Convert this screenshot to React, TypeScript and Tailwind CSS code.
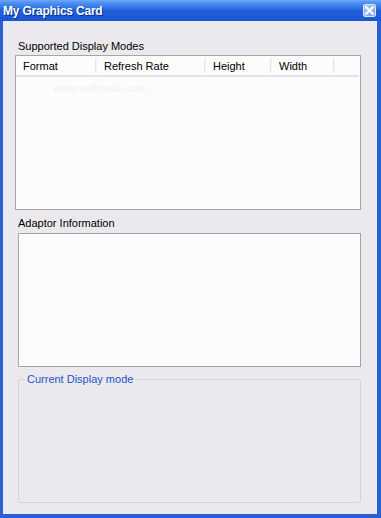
import React from "react";

const font = { fontFamily: '"Liberation Sans", Arial, sans-serif' };

function HeaderCell({ label, width, divider = true }: { label: string; width: number; divider?: boolean }) {
  return (
    <div className="relative flex h-full items-center pl-[7px] pt-[2px]" style={{ width }}>
      <span>{label}</span>
      {divider && <div className="absolute right-0 top-[2px] bottom-[2px] w-[2px] bg-[#e6e5e8] border-r border-[#f4f4f6]" />}
    </div>
  );
}

export default function App() {
  return (
    <div className="w-[381px] h-[518px] flex flex-col text-[11px] text-black select-none" style={font}>
      {/* Title bar */}
      <div className="h-[21px] flex items-center justify-between bg-gradient-to-b from-[#5a9cf6] via-[#1f5fdc] to-[#1a56d2] pl-[3px] pr-[5px] border-t border-[#6ea4f5]">
        <span className="text-white font-bold text-[12px] leading-none tracking-[-0.2px] [text-shadow:1px_1px_0_#0a2a8a]">My Graphics Card</span>
        <div className="w-[13px] h-[13px] mt-[-1px] rounded-[2px] bg-gradient-to-br from-[#a9c6f4] to-[#7fa6e8] border border-[#dbe7fb] flex items-center justify-center">
          <svg width="9" height="9" viewBox="0 0 9 9">
            <path d="M1 1 L8 8 M8 1 L1 8" stroke="white" strokeWidth="2" strokeLinecap="square" />
          </svg>
        </div>
      </div>
      {/* Body */}
      <div className="flex-1 flex flex-col bg-[#ebe9ed] border-l-[3px] border-r-[4px] border-b-[4px] border-[#2a5fd6] pl-[12px]">
        <div className="mt-[18px] ml-[3px] h-[14px] leading-[14px]">Supported Display Modes</div>
        <div className="relative mt-[2px] w-[346px] h-[155px] border border-[#a6a6a9] bg-[#fcfcfc] overflow-hidden">
          <div className="flex h-[21px] border-b-2 border-[#e4e3e7] w-[343px]">
            <HeaderCell label="Format" width={81} />
            <HeaderCell label="Refresh Rate" width={109} />
            <HeaderCell label="Height" width={66} />
            <HeaderCell label="Width" width={63} />
          </div>
          <div className="pl-[37px] pt-[6px] text-[11px] text-[#f1f1f1] leading-none">www.softpedia.com</div>
        </div>
        <div className="mt-[6px] ml-[3px] h-[14px] leading-[14px]">Adaptor Information</div>
        <div className="mt-[3px] ml-[3px] w-[343px] h-[134px] border border-[#a6a6a9] bg-[#fcfcfc]" />
        <div className="relative mt-[12px] ml-[3px] w-[343px] h-[124px] border border-[#d5d3d8] rounded-[3px]">
          <span className="absolute left-[6px] top-[-8px] px-[2px] bg-[#ebe9ed] text-[#1d55c7] leading-[14px]">Current Display mode</span>
        </div>
      </div>
    </div>
  );
}
